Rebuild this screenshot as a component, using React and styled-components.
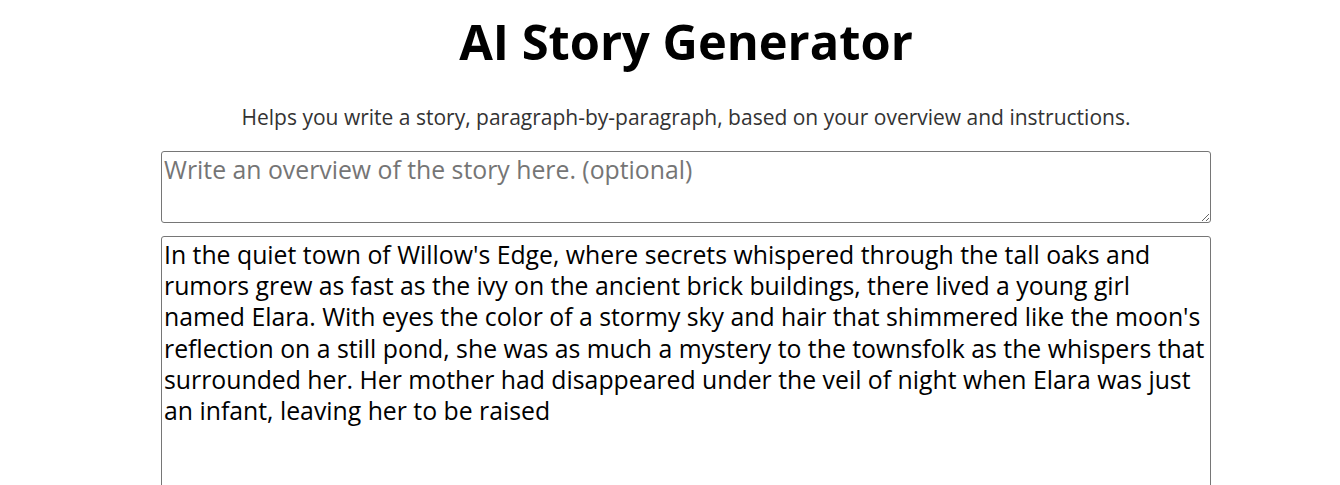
import React from 'react';
import styled, { createGlobalStyle } from 'styled-components';

const GlobalStyle = createGlobalStyle`
    body {
        margin: 0;
        background: #ffffff;
        font-family: "Open Sans", "Noto Sans", sans-serif;
        color: #000000;
    }
`

const Page = styled.main`
    display: flex;
    flex-direction: column;
    align-items: center;
    padding-left: 32px;
    padding-top: 12px;
`

const Title = styled.h1`
    margin: 0;
    font-size: 48.8px;
    line-height: 58px;
    font-weight: 700;
`

const Subtitle = styled.p`
    margin: 33px 0 20px;
    font-size: 21px;
    line-height: 28px;
    color: #333333;
`

const Form = styled.div`
    display: flex;
    flex-direction: column;
    gap: 13px;
    width: 1050px;
`

const Field = styled.textarea`
    box-sizing: border-box;
    width: 100%;
    height: ${(props) => props.$height}px;
    margin: 0;
    padding: 2px;
    border: 1px solid #767676;
    border-radius: 3px;
    font-family: inherit;
    font-size: 24.8px;
    line-height: 31.2px;
    color: #000000;
    resize: ${(props) => (props.$resize ? 'both' : 'none')};

    &::placeholder {
        color: #757575;
    }
`

const story = "In the quiet town of Willow's Edge, where secrets whispered through the tall oaks and rumors grew as fast as the ivy on the ancient brick buildings, there lived a young girl named Elara. With eyes the color of a stormy sky and hair that shimmered like the moon's reflection on a still pond, she was as much a mystery to the townsfolk as the whispers that surrounded her. Her mother had disappeared under the veil of night when Elara was just an infant, leaving her to be raised";

const App = () => {
    return (
        <>
            <GlobalStyle />
            <Page>
                <Title>AI Story Generator</Title>
                <Subtitle>Helps you write a story, paragraph-by-paragraph, based on your overview and instructions.</Subtitle>
                <Form>
                    <Field $height={72} $resize placeholder="Write an overview of the story here. (optional)" />
                    <Field $height={300} defaultValue={story} />
                </Form>
            </Page>
        </>
    )
}

export default App;
